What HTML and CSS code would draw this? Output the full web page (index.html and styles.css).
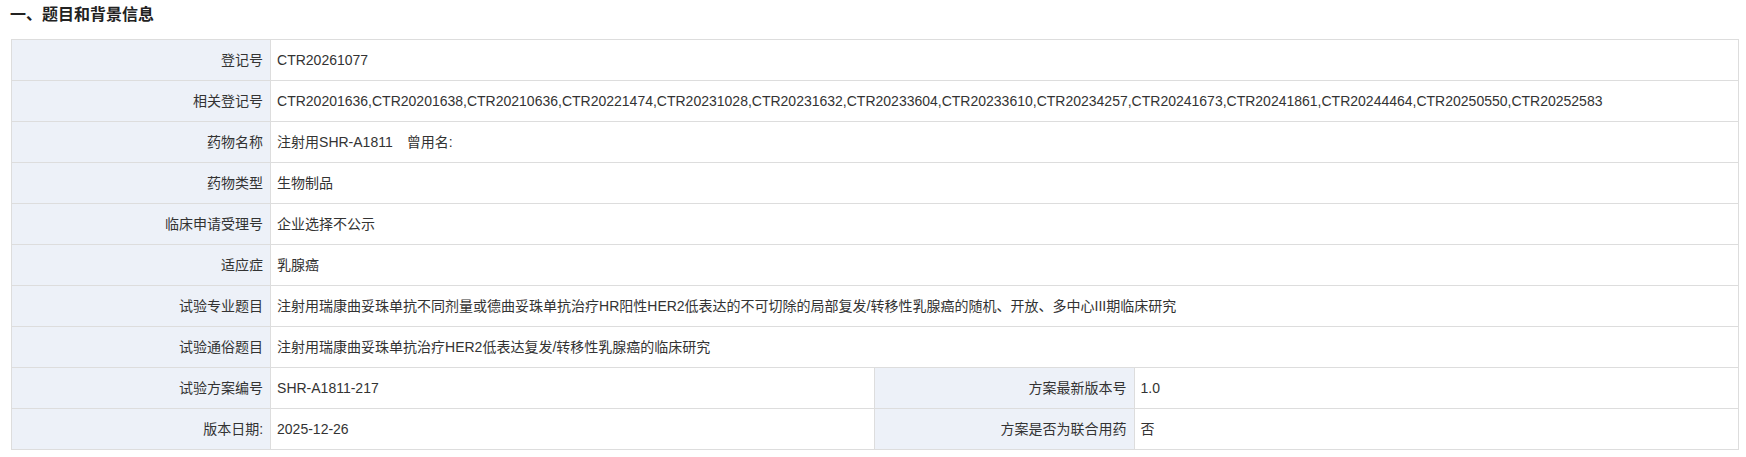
FILE: index.html
```html
<!DOCTYPE html>
<html lang="zh-CN">
<head>
<meta charset="utf-8">
<link rel="stylesheet" href="styles.css">
</head>
<body>
<div class="page">
  <h2 class="section-title">一、题目和背景信息</h2>
  <table class="info-table">
    <colgroup>
      <col class="c-label"><col class="c-value"><col class="c-label"><col class="c-value">
    </colgroup>
    <tr><th>登记号</th><td colspan="3">CTR20261077</td></tr>
    <tr><th>相关登记号</th><td colspan="3">CTR20201636,CTR20201638,CTR20210636,CTR20221474,CTR20231028,CTR20231632,CTR20233604,CTR20233610,CTR20234257,CTR20241673,CTR20241861,CTR20244464,CTR20250550,CTR20252583</td></tr>
    <tr><th>药物名称</th><td colspan="3">注射用SHR-A1811<span class="gap"></span>曾用名:</td></tr>
    <tr><th>药物类型</th><td colspan="3">生物制品</td></tr>
    <tr><th>临床申请受理号</th><td colspan="3">企业选择不公示</td></tr>
    <tr><th>适应症</th><td colspan="3">乳腺癌</td></tr>
    <tr><th>试验专业题目</th><td colspan="3">注射用瑞康曲妥珠单抗不同剂量或德曲妥珠单抗治疗HR阳性HER2低表达的不可切除的局部复发/转移性乳腺癌的随机、开放、多中心III期临床研究</td></tr>
    <tr><th>试验通俗题目</th><td colspan="3">注射用瑞康曲妥珠单抗治疗HER2低表达复发/转移性乳腺癌的临床研究</td></tr>
    <tr><th>试验方案编号</th><td>SHR-A1811-217</td><th>方案最新版本号</th><td>1.0</td></tr>
    <tr><th>版本日期:</th><td>2025-12-26</td><th>方案是否为联合用药</th><td>否</td></tr>
  </table>
</div>
</body>
</html>
```

FILE: styles.css
```css
* { box-sizing: border-box; }
html, body {
  margin: 0;
  padding: 0;
  background: #fff;
}
body {
  font-family: "Liberation Sans", "Noto Sans CJK SC", sans-serif;
  color: #333;
  font-size: 14px;
}
.page {
  padding: 0 7px 0 11px;
}
.section-title {
  margin: 0 0 9px -1px;
  font-size: 16px;
  line-height: 30px;
  font-weight: bold;
  color: #222;
}
.info-table {
  width: 100%;
  border-collapse: collapse;
  table-layout: fixed;
  border: 1px solid #ddd;
}
.c-label { width: 15%; }
.c-value { width: 35%; }
.info-table th,
.info-table td {
  border: 1px solid #ddd;
  padding: 10px 7px 10px 6px;
  line-height: 20px;
  font-size: 14px;
  white-space: nowrap;
  vertical-align: middle;
}
.info-table th {
  background: #edf1f8;
  text-align: right;
  font-weight: normal;
  color: #333;
}
.info-table td {
  text-align: left;
  background: #fff;
  color: #333;
}
.gap {
  display: inline-block;
  width: 14px;
}
```
